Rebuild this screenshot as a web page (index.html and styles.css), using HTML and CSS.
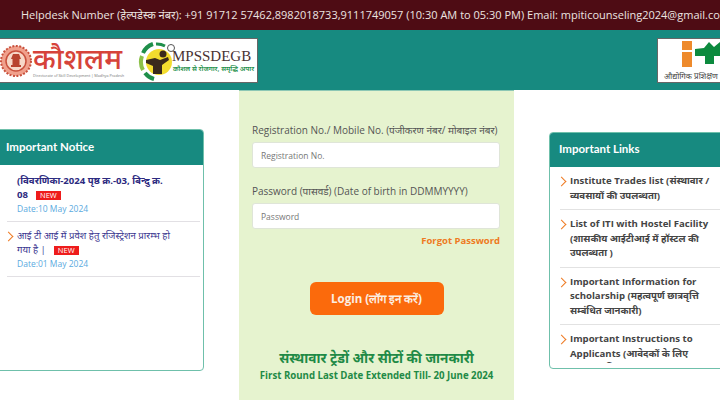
FILE: index.html
```html
<!DOCTYPE html>
<html lang="hi">
<head>
    <meta charset="UTF-8">
    <meta name="viewport" content="width=device-width, initial-scale=1.0">
    <title>MP ITI Counseling</title>
    <link rel="stylesheet" href="styles.css">
</head>
<body>
    <div class="topbar">Helpdesk Number (हेल्पडेस्क नंबर): +91 91712 57462,8982018733,9111749057 (10:30 AM to 05:30 PM) Email: mpiticounseling2024@gmail.com</div>

    <header class="header">
        <div class="logo-box">
            <div class="kaushalam">
                <svg class="emblem" width="32" height="32" viewBox="0 0 32 32">
                    <circle cx="16" cy="16" r="15" fill="#f0a08c"/>
                    <circle cx="16" cy="16" r="15" fill="none" stroke="#c8503c" stroke-width="2" stroke-dasharray="2 1.5"/>
                    <circle cx="16" cy="16" r="10" fill="#f7d8c8" stroke="#c8503c" stroke-width="1.5"/>
                    <path d="M11 22h10v-2h-1.5v-6h1.5l-2-5h-6l-2 5h1.5v6H11z" fill="#b8442f"/>
                </svg>
                <div>
                    <div class="kaushalam-name">कौशलम</div>
                    <div class="kaushalam-sub">Directorate of Skill Development | Madhya Pradesh</div>
                </div>
            </div>
            <div class="mpss">
                <svg width="38" height="42" viewBox="0 0 38 42">
                    <path d="M15 4A17 17 0 0 0 5 13" fill="none" stroke="#1f8f4a" stroke-width="4"/>
                    <path d="M4 16A17 17 0 0 0 5 30" fill="none" stroke="#8cc04a" stroke-width="4"/>
                    <path d="M7 33A17 17 0 0 0 16 39" fill="none" stroke="#1f8f4a" stroke-width="4"/>
                    <path d="M18 4A17 17 0 0 1 27 6" fill="none" stroke="#1f8f4a" stroke-width="3"/>
                    <circle cx="21" cy="22" r="13" fill="#f3dc2e"/>
                    <circle cx="25" cy="14" r="3.5" fill="#3a2a1c"/>
                    <path d="M8 20l9-2 5 2 8-3 1 3-7 5v9h-9v-8l-7-3z" fill="#3a2a1c"/>
                    <circle cx="33" cy="8" r="3.5" fill="#fff" stroke="#555" stroke-width="1"/>
                </svg>
                <div>
                    <div class="mpss-name">MPSSDEGB</div>
                    <div class="mpss-sub">कौशल से रोजगार, समृद्धि अपार</div>
                </div>
            </div>
        </div>
        <div class="logo-box-right">
            <div class="iti-mark">
                <span class="iti-i"><span class="iti-dot"></span><span class="iti-stem"></span></span>
                <svg width="40" height="26" viewBox="0 0 40 26"><path d="M0 8L9 7 14 1 19 6 25 1 30 7H40V15H19V23H10V15H0z" fill="#0c8a3e"/></svg>
            </div>
            <div class="iti-sub">औद्योगिक प्रशिक्षण</div>
        </div>
    </header>

    <main class="main">
        <section class="card notice">
            <h2 class="card-title">Important Notice</h2>
            <div class="card-scroll">
                <ul class="notice-list">
                    <li class="notice-item no-arrow">
                        <a class="notice-bold">(विवरणिका-2024 पृष्ठ क्र.-03, बिन्दु क्र. 08</a><span class="new">NEW</span>
                        <div class="date">Date:10 May 2024</div>
                    </li>
                    <li class="notice-item">
                        <a class="notice-link">आई टी आई में प्रवेश हेतु रजिस्ट्रेशन प्रारम्भ हो गया है |</a><span class="new">NEW</span>
                        <div class="date">Date:01 May 2024</div>
                    </li>
                </ul>
            </div>
        </section>

        <section class="login">
            <form class="login-form">
                <label class="field-label">Registration No./ Mobile No. (पंजीकरण नंबर/ मोबाइल नंबर)</label>
                <input class="field" type="text" placeholder="Registration No.">
                <label class="field-label second">Password (पासवर्ड) (Date of birth in DDMMYYYY)</label>
                <input class="field" type="password" placeholder="Password">
                <a class="forgot">Forgot Password</a>
                <button class="login-btn" type="button">Login (लॉग इन करें)</button>
            </form>
            <div class="trades-title">संस्थावार ट्रेडों और सीटों की जानकारी</div>
            <div class="trades-sub">First Round Last Date Extended Till- 20 June 2024</div>
        </section>

        <section class="card links">
            <h2 class="card-title">Important Links</h2>
            <div class="card-scroll">
                <ul class="links-list">
                    <li class="link-item">Institute Trades list (संस्थावार / व्यवसायों की उपलब्धता)</li>
                    <li class="link-item">List of ITI with Hostel Facility (शासकीय आईटीआई में हॉस्टल की उपलब्धता )</li>
                    <li class="link-item">Important Information for scholarship (महत्वपूर्ण छात्रवृत्ति सम्बंधित जानकारी)</li>
                    <li class="link-item">Important Instructions to Applicants (आवेदकों के लिए महत्वपूर्ण निर्देश)</li>
                </ul>
            </div>
        </section>
    </main>
</body>
</html>
```

FILE: styles.css
```css
* {
    box-sizing: border-box;
}
html, body {
    margin: 0;
    height: 400px;
    overflow: hidden;
}
body {
    font-family: "Open Sans", "Noto Sans", sans-serif;
    background: #fff;
    color: #444;
}
.topbar {
    height: 30px;
    background: #4e0c14;
    color: #ece4e0;
    font-size: 11px;
    line-height: 30px;
    padding-left: 21px;
    white-space: nowrap;
    overflow: hidden;
}
.header {
    height: 60px;
    background: #178a80;
    display: flex;
    justify-content: space-between;
    align-items: flex-start;
    padding-top: 8px;
    overflow: hidden;
}
.logo-box {
    width: 258px;
    height: 45px;
    background: #fff;
    border: 1px solid #666;
    border-left: 0;
    display: flex;
    align-items: center;
}
.kaushalam {
    display: flex;
    flex: none;
    align-items: center;
    gap: 1px;
    width: 138px;
}
.emblem {
    flex: none;
}
.kaushalam-name {
    color: #d6433a;
    font-size: 29px;
    font-weight: 500;
    line-height: 30px;
}
.kaushalam-sub {
    font-size: 3.8px;
    color: #777;
    white-space: nowrap;
    line-height: 5px;
}
.mpss {
    display: flex;
    align-items: center;
}
.mpss-name {
    font-family: "Liberation Serif", serif;
    font-size: 15px;
    color: #4a3232;
    margin-left: -4px;
    line-height: 16px;
}
.mpss-sub {
    font-size: 6.8px;
    font-weight: 600;
    color: #1f8f4a;
    margin-left: -3px;
    white-space: nowrap;
    line-height: 10px;
}
.logo-box-right {
    width: 80px;
    height: 45px;
    flex: none;
    background: #fff;
    border: 1px solid #666;
    border-right: 0;
    padding: 2px 0 0 6px;
    margin-right: -17px;
}
.iti-mark {
    display: flex;
    gap: 3px;
    height: 27px;
}
.iti-i {
    display: flex;
    flex-direction: column;
    gap: 2px;
    width: 10px;
    margin-left: 18px;
}
.iti-dot {
    height: 9px;
    background: #ee8a2c;
}
.iti-stem {
    height: 15px;
    background: #ee8a2c;
}
.iti-sub {
    margin-top: 2px;
    font-size: 8px;
    color: #444;
    white-space: nowrap;
    line-height: 12px;
}
.main {
    display: grid;
    grid-template-columns: 204px 275px 190px;
    column-gap: 35px;
    align-items: start;
}
.card {
    background: #fff;
    border: 1px solid #6fc0ab;
    border-radius: 4px;
    overflow: hidden;
}
.card-title {
    margin: 0;
    background: #178a80;
    color: #fff;
    font-family: Lato, "Open Sans", sans-serif;
    font-size: 11.5px;
    font-weight: 700;
    line-height: 33px;
}
.notice {
    margin: 39px 0 0 -10px;
    height: 242px;
}
.notice .card-title {
    height: 35px;
    padding-left: 15px;
}
.notice .card-scroll {
    height: 205px;
    overflow: hidden;
    padding: 2px 3px 0 16px;
}
.notice-list, .links-list {
    list-style: none;
    margin: 0;
    padding: 0;
}
.notice-item {
    position: relative;
    padding: 7px 24px 6px 10px;
    border-bottom: 1px solid #e2e0e4;
    font-size: 9.6px;
    line-height: 14px;
}
.notice-item::before, .link-item::before {
    content: "";
    position: absolute;
    left: -2px;
    top: 11px;
    width: 6px;
    height: 6px;
    border-top: 1.8px solid #ee7a22;
    border-right: 1.8px solid #ee7a22;
    transform: rotate(45deg);
}
.notice-item.no-arrow::before {
    display: none;
}
.notice-bold {
    color: #2c2a80;
    font-weight: 700;
}
.notice-link {
    color: #3a3690;
}
.new {
    display: inline-block;
    margin: 3px 0 0 8px;
    padding: 0 4px;
    background: #ee1c1c;
    color: #fff;
    font-size: 7.5px;
    line-height: 9px;
    vertical-align: top;
}
.date {
    color: #5aaae0;
    font-size: 8.5px;
    line-height: 13px;
}
.login {
    height: 310px;
    background: #e6f3cf;
    border-top: 1px solid #8cc7b5;
    padding: 0 13px;
}
.login-form {
    display: flex;
    flex-direction: column;
    padding-top: 32px;
}
.field-label {
    color: #555;
    font-size: 10px;
    line-height: 14px;
    white-space: nowrap;
}
.field-label.second {
    margin-top: 16px;
}
.field {
    width: 248px;
    height: 26px;
    margin-top: 5px;
    padding: 0 8px;
    border: 1px solid #dfe5d8;
    border-radius: 3px;
    background: #fff;
    font-family: "Open Sans", sans-serif;
    font-size: 8.5px;
    outline: none;
}
.field::placeholder {
    color: #777;
}
.forgot {
    width: 248px;
    margin-top: 5px;
    color: #ee7a22;
    font-size: 9.5px;
    font-weight: 700;
    line-height: 13px;
    text-align: right;
}
.login-btn {
    align-self: center;
    width: 134px;
    height: 33px;
    margin-top: 35px;
    border: 0;
    border-radius: 6px;
    background: #fb6a0c;
    color: #fbeee2;
    font-family: "Open Sans", sans-serif;
    font-size: 11.5px;
    font-weight: 700;
}
.trades-title {
    margin-top: 33px;
    color: #1f8a46;
    font-size: 13.6px;
    font-weight: 700;
    line-height: 20px;
    text-align: center;
}
.trades-sub {
    margin-top: 1px;
    color: #1f8a46;
    font-size: 9.66px;
    font-weight: 700;
    line-height: 14px;
    text-align: center;
    white-space: nowrap;
}
.links {
    margin-top: 42px;
    height: 237px;
}
.links .card-title {
    height: 34px;
    padding-left: 9px;
    line-height: 32px;
}
.links .card-scroll {
    height: 196px;
    overflow: hidden;
    padding-left: 10px;
}
.link-item {
    position: relative;
    width: 165px;
    padding: 7px 10px 6px 10px;
    border-bottom: 1px solid #e2e2e2;
    color: #444;
    font-size: 9.6px;
    font-weight: 700;
    line-height: 14.5px;
}
```
